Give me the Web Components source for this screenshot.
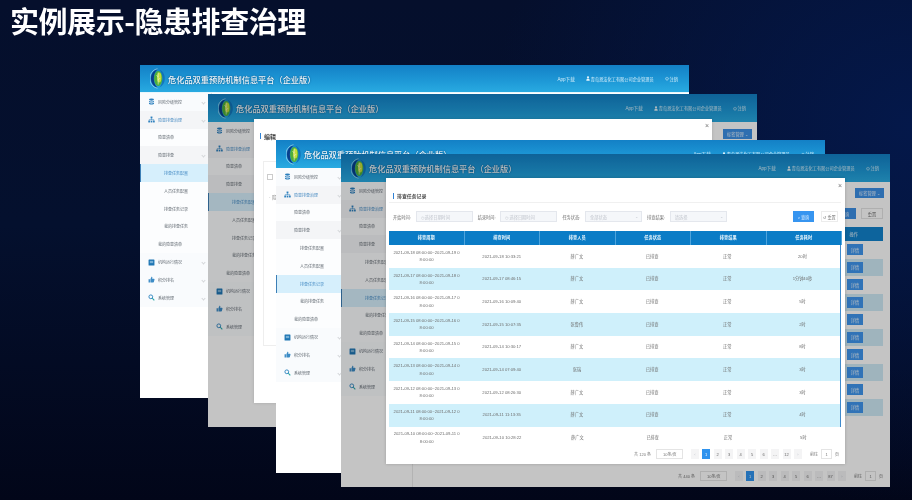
<!DOCTYPE html>
<html lang="zh">
<head>
<meta charset="utf-8">
<title>实例展示-隐患排查治理</title>
<style>
  html, body { margin: 0; height: 100%; }
  body {
    overflow: hidden;
    font-family: "Liberation Sans", "Noto Sans CJK SC", sans-serif;
    background:
      radial-gradient(ellipse 420px 380px at 100% 25%, #04184a 0%, rgba(4, 24, 74, 0) 100%),
      linear-gradient(180deg, #050f2c 0%, #04102e 45%, #020619 100%);
  }
  slide-deck { width: 912px; height: 500px; }
</style>
</head>
<body>
<slide-deck heading="实例展示-隐患排查治理">
  <platform-window style="left:140px;top:65px" active="4" line></platform-window>

  <platform-window style="left:208px;top:94px" active="4" dim>
    <tag-button></tag-button>
    <edit-modal slot="modal"></edit-modal>
  </platform-window>

  <platform-window style="left:276px;top:140px" active="6"></platform-window>

  <platform-window style="left:341px;top:154px" active="6" dim>
    <task-list></task-list>
    <record-modal slot="modal"></record-modal>
  </platform-window>
</slide-deck>

<script>
const CJK_FONT = '"Liberation Sans", "Noto Sans CJK SC", sans-serif';

const MENU_ICONS = {
  db: '<ellipse cx="5" cy="2.2" rx="3.6" ry="1.6" fill="#2b7fbd"/><path d="M1.4 3.4v1.6c0 .9 1.6 1.6 3.6 1.6s3.6-.7 3.6-1.6V3.4c0 .9-1.6 1.6-3.6 1.6S1.4 4.3 1.4 3.4zM1.4 6.2v1.6c0 .9 1.6 1.6 3.6 1.6s3.6-.7 3.6-1.6V6.2c0 .9-1.6 1.6-3.6 1.6S1.4 7.1 1.4 6.2z" fill="#2b7fbd"/>',
  tree: '<rect x="3.7" y=".8" width="2.6" height="2.6" fill="#2b7fbd"/><path d="M5 3.4v2M1.6 7V5.4h6.8V7" fill="none" stroke="#2b7fbd" stroke-width=".9"/><rect x=".4" y="6.8" width="2.4" height="2.4" fill="#2b7fbd"/><rect x="3.8" y="6.8" width="2.4" height="2.4" fill="#2b7fbd"/><rect x="7.2" y="6.8" width="2.4" height="2.4" fill="#2b7fbd"/>',
  check: '<rect x=".8" y=".8" width="8.4" height="8.4" rx=".8" fill="#1f76b4"/><path d="M2.6 3.4h4.8M2.6 5.2h4.8" stroke="#bfe0f4" stroke-width=".9"/>',
  thumb: '<path d="M.8 4.6h2v4.6h-2zM3.4 4.6 5 .9c.9 0 1.4.7 1.2 1.6l-.3 1.5h2.6c.6 0 1 .5.8 1.1l-.9 3.4c-.1.4-.5.7-.9.7H3.4z" fill="#3d8cc6"/>',
  search: '<circle cx="4" cy="4" r="2.7" fill="none" stroke="#2b83bf" stroke-width="1.3"/><path d="M6 6l3 3.2" stroke="#2ba6a8" stroke-width="1.5"/>',
};

const MENU = [
  { label: '风险分级管控', icon: 'db', arrow: true },
  { label: '隐患排查治理', icon: 'tree', arrow: true, open: true },
  { label: '隐患清单', level: 1 },
  { label: '隐患排查', level: 1, arrow: true, open: true },
  { label: '排查任务配置', level: 2 },
  { label: '人员任务配置', level: 2 },
  { label: '排查任务记录', level: 2 },
  { label: '我的排查任务', level: 2 },
  { label: '我的隐患清单', level: 1 },
  { label: '机构运行情况', icon: 'check', arrow: true },
  { label: '积分排名', icon: 'thumb', arrow: true },
  { label: '系统管理', icon: 'search', arrow: true },
];

class SlideDeck extends HTMLElement {
  constructor() {
    super();
    this.attachShadow({ mode: 'open' });
  }

  connectedCallback() {
    this.shadowRoot.innerHTML = `
      <style>
        :host { display: block; position: relative; overflow: hidden; }
        h1 {
          margin: 0;
          padding: 0 0 0 10px;
          height: 40px;
          color: #fff;
          font: 700 29px/40px "Noto Sans CJK SC", sans-serif;
          letter-spacing: -.45px;
          filter: blur(.3px);
        }
      </style>
      <h1>${this.getAttribute('heading')}</h1>
      <slot></slot>
    `;
  }
}

class PlatformWindow extends HTMLElement {
  constructor() {
    super();
    this.attachShadow({ mode: 'open' });
  }

  connectedCallback() {
    const active = Number(this.getAttribute('active'));
    const rows = MENU.map((item, index) => `
      <div class="row l${item.level || 0} ${item.open ? 'open' : ''} ${index === active ? 'active' : ''}">
        ${item.icon ? `<svg viewBox="0 0 10 10">${MENU_ICONS[item.icon]}</svg>` : ''}
        <span>${item.label}</span>
        ${item.arrow ? '<i></i>' : ''}
      </div>`).join('');

    this.shadowRoot.innerHTML = `
      <style>
        :host {
          display: block;
          position: absolute;
          width: 549px;
          height: 333px;
          background: #fff;
          font-family: ${CJK_FONT};
          filter: blur(.4px);
        }
        .header {
          height: 28px;
          display: flex;
          align-items: center;
          padding: 0 11px 0 10px;
          color: #d5eefa;
          background: linear-gradient(180deg, #1380c6 0%, #1f9bd8 65%, #29aae1 100%);
          position: relative;
        }
        :host([line]) .header { height: 27px; border-bottom: 1px solid #e8f6fc; }
        .logo { width: 16px; height: 21px; flex: none; }
        .title {
          margin-left: 2px;
          font-size: 8.200px;
          font-weight: 500;
          color: #f2fbff;
          text-shadow: 0 0 1.500px #063a66;
          white-space: nowrap;
        }
        .links {
          margin-left: auto;
          display: flex;
          align-items: center;
          font-size: 4.200px;
          white-space: nowrap;
        }
        .links svg { width: 4px; height: 5px; margin-right: 1px; }
        .app { font-size: 4.600px; margin-right: 11px; }
        .user { margin-right: 11px; display: flex; align-items: center; }
        .logout { display: flex; align-items: center; }
        .body { display: flex; height: 305px; }
        nav {
          width: 72px;
          flex: none;
          box-sizing: border-box;
          border-right: 1px solid #e9e9e9;
        }
        .row {
          height: 17.800px;
          display: flex;
          align-items: center;
          box-sizing: border-box;
          padding: 0 8px 0 7.500px;
          font-size: 4px;
          color: #666e76;
          background: #f9fbfd;
          position: relative;
          white-space: nowrap;
        }
        .row svg { width: 7px; height: 7px; margin-right: 3.500px; flex: none; }
        .l1 { padding-left: 18px; background: #fcfdfe; }
        .l2 { padding-left: 24px; background: #fcfdfe; }
        .open { background: #f4f5f7; }
        .open.l1 { background: #f4f5f7; }
        .row.open:not(.l1) span { color: #4e8fc4; }
        .active, .active.l2 { background: #d6effc; color: #4b8fc6; }
        .active::before {
          content: '';
          position: absolute;
          left: 0; top: 0; bottom: 0;
          width: 1px;
          background: #3d7fb6;
        }
        .row i {
          position: absolute;
          left: 62px;
          top: 8px;
          width: 2px;
          height: 2px;
          border-right: .5px solid #d4d7da;
          border-bottom: .5px solid #d4d7da;
          transform: rotate(45deg);
        }
        main { flex: 1; min-width: 0; display: flex; flex-direction: column; }
        .mask { display: none; position: absolute; inset: 0; background: rgba(0, 0, 0, .23); }
        :host([dim]) .mask { display: block; }
      </style>
      <div class="header">
        <svg class="logo" viewBox="0 0 16 21">
          <path d="M7.500 .8C2.400 1.800 0 6 0 10.500s2.400 8.700 7.500 9.700" fill="none" stroke="#c9ecfa" stroke-width=".6"/>
          <path d="M7.500 1.500C2.900 2.600 1 6.500 1 10.500s1.900 7.900 6.500 9C5 17.400 3.800 14 3.800 10.500S5 3.600 7.500 1.500z" fill="#0a3f8c"/>
          <path d="M9.500 1.800c3.200 1.200 5.300 4.600 5.300 8.700s-2.100 7.500-5.300 8.700c1.900-2.200 2.900-5.300 2.900-8.700s-1-6.500-2.900-8.700z" fill="#0e5fa8" opacity=".6"/>
          <ellipse cx="8.200" cy="10.500" rx="4.100" ry="7.600" fill="#4fae3a"/>
          <ellipse cx="9.200" cy="9.500" rx="2.200" ry="5" fill="#c4dc3a"/>
          <path d="M8.200 4.500v12M8.200 9 6.500 7.200M8.200 12l2-2" stroke="#eaf7d8" stroke-width=".6" fill="none"/>
        </svg>
        <span class="title">危化品双重预防机制信息平台（企业版）</span>
        <div class="links">
          <span class="app">App下载</span>
          <span class="user">
            <svg viewBox="0 0 8 10"><circle cx="4" cy="2.600" r="2.200" fill="#e4f4fb"/><path d="M.6 9.500c0-3 1.400-4.400 3.400-4.400s3.400 1.400 3.400 4.400z" fill="#e4f4fb"/></svg>
            青岛恩法化工有限公司企业管理员
          </span>
          <span class="logout">
            <svg viewBox="0 0 10 10"><path d="M3 2.400a3.600 3.600 0 1 0 4 0M5 1v4" fill="none" stroke="#e4f4fb" stroke-width="1.400"/></svg>
            注销
          </span>
        </div>
      </div>
      <div class="body">
        <nav>${rows}</nav>
        <main><slot></slot></main>
      </div>
      <div class="mask"></div>
      <slot name="modal"></slot>
    `;
  }
}

class TagButton extends HTMLElement {
  constructor() {
    super();
    this.attachShadow({ mode: 'open' });
  }

  connectedCallback() {
    this.shadowRoot.innerHTML = `
      <style>
        :host {
          display: flex;
          flex: none;
          align-items: center;
          justify-content: center;
          align-self: flex-end;
          width: 29px;
          height: 10px;
          margin: 7px 5px 0 0;
          background: #3c8fe6;
          color: #e6f2fc;
          font-size: 4.200px;
        }
      </style>
      标签管理 ⌄
    `;
  }
}

class PageNav extends HTMLElement {
  constructor() {
    super();
    this.attachShadow({ mode: 'open' });
  }

  connectedCallback() {
    const total = this.getAttribute('total');
    const last = this.getAttribute('last');
    const pages = ['1', '2', '3', '4', '5', '6', '…', last]
      .map((page, index) => `<b class="${index === 0 ? 'on' : ''}">${page}</b>`).join('');

    this.shadowRoot.innerHTML = `
      <style>
        :host {
          display: flex;
          align-items: center;
          justify-content: flex-end;
          height: 10px;
          font-size: 4px;
          color: #777;
          white-space: nowrap;
        }
        .size {
          width: 27px;
          height: 10px;
          margin: 0 5px 0 5px;
          box-sizing: border-box;
          border: .5px solid #e4e4e4;
          display: flex;
          align-items: center;
          padding-left: 6px;
        }
        b {
          font-weight: 400;
          width: 8px;
          height: 10px;
          margin-right: 3.500px;
          display: flex;
          align-items: center;
          justify-content: center;
          background: #f4f4f5;
          color: #666;
        }
        b.on { background: #2f93ee; color: #fff; }
        .prev { margin-left: 3px; margin-right: 3px; color: #c0c4cc; }
        .next { color: #c0c4cc; margin-right: 8px; }
        .jump {
          width: 11px;
          height: 10px;
          margin: 0 3px;
          box-sizing: border-box;
          border: .5px solid #e4e4e4;
          display: flex;
          align-items: center;
          justify-content: center;
        }
      </style>
      <span>共 ${total} 条</span>
      <span class="size">10条/页</span>
      <b class="prev">‹</b>
      ${pages}
      <b class="next">›</b>
      <span>前往</span>
      <span class="jump">1</span>
      <span>页</span>
    `;
  }
}

class TaskList extends HTMLElement {
  constructor() {
    super();
    this.attachShadow({ mode: 'open' });
  }

  connectedCallback() {
    const rows = Array.from({ length: 10 }, () => '<div class="row"><span>详情</span></div>').join('');

    this.shadowRoot.innerHTML = `
      <style>
        :host {
          display: flex;
          flex-direction: column;
          height: 305px;
          box-sizing: border-box;
          padding: 0 7px 6px 0;
          font-size: 4.200px;
        }
        tag-button { margin: 6px -1px 0 0; }
        .tools { display: flex; justify-content: flex-end; margin: 10px 0 8px; gap: 5px; height: 11px; }
        .tools span { display: flex; align-items: center; justify-content: center; height: 11px; }
        .query { width: 22px; background: #3c8fe6; color: #e6f2fc; }
        .reset { width: 22px; border: .5px solid #e4e4e4; box-sizing: border-box; color: #6b6b6b; }
        .table-head {
          height: 14px;
          background: #1283cd;
          color: #e4f2fa;
          display: flex;
          align-items: center;
          justify-content: flex-end;
          padding-right: 25px;
        }
        .row {
          height: 17.500px;
          display: flex;
          align-items: center;
          justify-content: flex-end;
          padding-right: 20px;
        }
        .row:nth-child(even) { background: #cfeaf6; }
        .row span {
          width: 16px;
          height: 11px;
          background: #3f96ee;
          color: #e6f2fc;
          display: flex;
          align-items: center;
          justify-content: center;
        }
        page-nav { margin-top: auto; }
      </style>
      <tag-button></tag-button>
      <div class="tools">
        <span class="query">查询</span>
        <span class="reset">重置</span>
      </div>
      <div class="table-head">操作</div>
      <div class="rows">${rows}</div>
      <page-nav total="440" last="87"></page-nav>
    `;
  }
}

class EditModal extends HTMLElement {
  constructor() {
    super();
    this.attachShadow({ mode: 'open' });
  }

  connectedCallback() {
    this.shadowRoot.innerHTML = `
      <style>
        :host {
          display: block;
          position: absolute;
          left: 46px;
          top: 25px;
          width: 458px;
          height: 284px;
          box-sizing: border-box;
          padding: 14px 8px 0 6px;
          background: #fff;
          box-shadow: 0 0 3px rgba(0, 0, 0, .15);
        }
        .title {
          display: flex;
          align-items: center;
          height: 6px;
          font-size: 6px;
          font-weight: 700;
          color: #444;
          gap: 3px;
        }
        .title::before { content: ''; width: 1px; height: 6px; background: #2f82d6; }
        .close { position: absolute; right: 3px; top: 3px; font-size: 7px; color: #777; line-height: 8px; }
        .box {
          margin: 22px 0 0 3px;
          height: 185px;
          border: .5px solid #eee;
          box-sizing: border-box;
          padding: 12px 0 0 3px;
          font-size: 5px;
          color: #888;
        }
        .check { display: block; width: 4px; height: 4px; border: .5px solid #ccc; }
        .item { margin: 13px 0 0 2px; }
      </style>
      <div class="title">编辑</div>
      <span class="close">×</span>
      <div class="box">
        <span class="check"></span>
        <div class="item">· 隐</div>
      </div>
    `;
  }
}

const RECORDS = [
  ['18', '19', '09-18 10:33:21', '薛广文', '20时'],
  ['17', '18', '09-17 08:46:15', '薛广文', '1分钟40秒'],
  ['16', '17', '09-16 10:09:40', '薛广文', '5时'],
  ['15', '16', '09-15 10:07:35', '张鲁伟', '2时'],
  ['14', '15', '09-14 10:30:17', '薛广文', '8时'],
  ['13', '14', '09-14 07:09:40', '张瑞', '3时'],
  ['12', '13', '09-12 08:26:30', '薛广文', '3时'],
  ['11', '12', '09-11 11:13:35', '薛广文', '4时'],
  ['10', '11', '09-10 10:28:22', '薛广文', '5时'],
];

class RecordModal extends HTMLElement {
  constructor() {
    super();
    this.attachShadow({ mode: 'open' });
  }

  connectedCallback() {
    const heads = ['排查周期', '排查时间', '排查人员', '任务状态', '排查结果', '任务耗时']
      .map((text) => `<div>${text}</div>`).join('');
    const rows = RECORDS.map(([from, to, time, person, cost]) => `
      <div class="tr">
        <div>2021-09-${from} 08:00:00~2021-09-${to} 0<br>8:00:00</div>
        <div>2021-${time}</div>
        <div>${person}</div>
        <div>已排查</div>
        <div>正常</div>
        <div>${cost}</div>
      </div>`).join('');

    this.shadowRoot.innerHTML = `
      <style>
        :host {
          display: flex;
          flex-direction: column;
          position: absolute;
          left: 45px;
          top: 24px;
          width: 459px;
          height: 286px;
          box-sizing: border-box;
          padding: 0 4px 0 3px;
          background: #fff;
          box-shadow: 0 0 3px rgba(0, 0, 0, .2);
          font-size: 4.200px;
          color: #6e6e6e;
        }
        .title {
          flex: none;
          height: 25px;
          box-sizing: border-box;
          padding: 11px 0 0 4px;
          display: flex;
          align-items: center;
          gap: 3px;
          font-size: 4.900px;
          font-weight: 700;
          color: #4c4c4c;
          border-bottom: .5px solid #f0f0f0;
        }
        .title::before { content: ''; width: 1px; height: 6px; background: #2f82d6; }
        .close { position: absolute; right: 3px; top: 4px; font-size: 7px; line-height: 8px; color: #777; }
        .filters {
          flex: none;
          display: flex;
          align-items: center;
          height: 11px;
          margin: 8px 0 9px;
          padding-left: 4px;
          white-space: nowrap;
        }
        .filters label { width: 22.700px; flex: none; }
        .field {
          width: 57px;
          height: 11px;
          flex: none;
          margin-right: 5px;
          box-sizing: border-box;
          padding: 0 0 0 4px;
          display: flex;
          align-items: center;
          justify-content: space-between;
          background: #f5f7fa;
          border: .5px solid #e4e7ed;
          color: #c0c4cc;
        }
        .field i { font-style: normal; margin-right: 3px; }
        .btn {
          display: flex;
          align-items: center;
          justify-content: center;
          height: 11px;
          flex: none;
          box-sizing: border-box;
        }
        .query { width: 21px; margin-left: auto; background: #3795f0; color: #e6f3fe; }
        .reset { width: 17px; margin: 0 3px 0 7px; border: .5px solid #ececec; color: #777; }
        .table { flex: none; border-right: 1px solid #3d89cc; }
        .grid, .tr { display: grid; grid-template-columns: repeat(6, 1fr); text-align: center; }
        .grid {
          height: 14px;
          align-items: center;
          margin-right: -1px;
          background: #0b7cc6;
          color: #eef8fd;
          font-weight: 700;
        }
        .grid div { line-height: 14px; border-right: .5px solid #4fa4dc; }
        .tr { height: 22.700px; align-items: center; line-height: 7.500px; }
        .tr:nth-child(even) { background: #cff0fb; }
        .tr:last-child { margin-right: -1px; background: #fff; }
        page-nav { margin: auto 2px 5px 0; }
      </style>
      <div class="title">排查任务记录</div>
      <span class="close">×</span>
      <div class="filters">
        <label>开始时间:</label><span class="field">◷ 选择日期时间</span>
        <label>结束时间:</label><span class="field">◷ 选择日期时间</span>
        <label>任务状态:</label><span class="field">全部状态<i>⌄</i></span>
        <label>排查结果:</label><span class="field">请选择<i>⌄</i></span>
        <span class="btn query">⌕ 查询</span>
        <span class="btn reset">↺ 重置</span>
      </div>
      <div class="grid">${heads}</div>
      <div class="table">${rows}</div>
      <page-nav total="120" last="12"></page-nav>
    `;
  }
}

customElements.define('slide-deck', SlideDeck);
customElements.define('platform-window', PlatformWindow);
customElements.define('tag-button', TagButton);
customElements.define('page-nav', PageNav);
customElements.define('task-list', TaskList);
customElements.define('edit-modal', EditModal);
customElements.define('record-modal', RecordModal);
</script>
</body>
</html>
